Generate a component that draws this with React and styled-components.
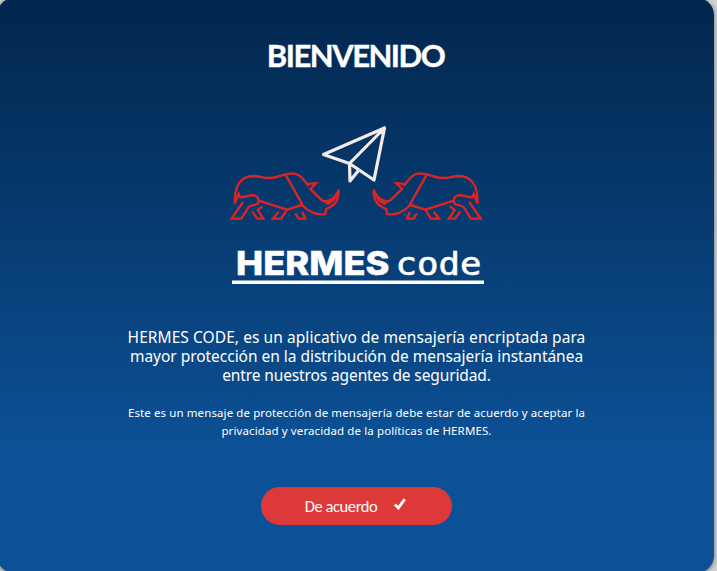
import React from "react";
import styled, { createGlobalStyle } from "styled-components";

const GlobalStyle = createGlobalStyle`
  * { box-sizing: border-box; }
  html, body { margin: 0; height: 571px; overflow: hidden; background: #d3d3d4; }
`;

const Viewport = styled.div`
  width: 717px;
  height: 571px;
  overflow: hidden;
`;

const Card = styled.main`
  width: 717px;
  height: 575px;
  margin: -2px 0 0 -3px;
  padding: 2px 0 0 2px;
  display: flex;
  flex-direction: column;
  align-items: center;
  border-radius: 17px;
  color: #fff;
  background: linear-gradient(180deg, #02264d 0%, #0c5197 80%, #0c5197 100%);
  box-shadow: 0 1px 5px rgba(0, 0, 0, 0.5);
`;

const Title = styled.h1`
  margin: 35px 0 0;
  padding-right: 2px;
  height: 40px;
  font: 700 31px/40px Lato, sans-serif;
  letter-spacing: -1.5px;
  -webkit-text-stroke: 0.4px #fff;
  white-space: nowrap;
`;

const Logo = styled.svg`
  display: block;
  width: 270px;
  height: 175px;
  margin-top: 40px;
`;

const Message = styled.div`
  margin-top: 38px;
  display: flex;
  flex-direction: column;
  align-items: center;
`;

const Note = styled(Message)`
  margin-top: 19px;
`;

const Line = styled.span`
  font: 400 15.5px/19px "Noto Sans", sans-serif;
  letter-spacing: ${(p) => p.$tracking}px;
  white-space: nowrap;
`;

const SmallLine = styled(Line)`
  font-size: 11.5px;
  line-height: 18px;
`;

const AcceptButton = styled.button`
  width: 191px;
  height: 38px;
  margin-top: 47px;
  padding: 0 2px 1px 0;
  display: flex;
  align-items: center;
  justify-content: center;
  gap: 17px;
  border: 0;
  border-radius: 19px;
  color: #fff;
  background: #de3939;
  font: 400 16.5px/36px Carlito, Lato, sans-serif;
  letter-spacing: -0.4px;
`;

const Check = styled.svg`
  width: 12px;
  height: 12px;
  margin-top: -3px;
`;

function Rhino() {
  return (
    <g fill="none" stroke="#dc2424" strokeWidth="7.2" strokeLinejoin="miter">
      <path d="M38 266 L40 236 C45 203 65 183 95 183 C115 184 125 190 145 189 C165 188 180 178 205 176 C225 174 235 182 246 196 L258 210 L263 206 L282 205 L265 222 L301 257 C320 263 339 251 350 224 C351 251 339 270 321 278 L312 283 L310 297 C285 302 258 290 240 270 L195 284 L110 257" />
      <path d="M38 266 L50 237 L54 247 C72 248 82 238 97 241 C109 244 113 256 107 266 C98 272 85 269 79 278 L58 311 L29 311 L63 261" />
      <path d="M190 178 L242 270" />
      <path d="M90 289 L106 311 L124 311 L107 285 L121 274" />
      <path d="M170 290 L153 311 L178 311 L195 284" />
      <path d="M220 295 L230 311 L250 311 L241 291" />
      <path d="M301 257 C320 263 339 251 350 224 C348 248 335 264 316 270 Z" fill="#dc2424" stroke="none" />
    </g>
  );
}

function HermesLogo() {
  return (
    <Logo viewBox="222 115 270 175" role="img" aria-label="HERMES code">
      <g transform="translate(222 115) scale(.33333)"><Rhino /></g>
      <g transform="translate(490.3 115) scale(-.33333 .33333)"><Rhino /></g>
      <g fill="none" stroke="#f4ece8" strokeWidth="3.2" strokeLinejoin="round" strokeLinecap="round">
        <path d="M384.5 128 L323.5 154.5 L349.5 163.5 L374 180 Z" />
        <path d="M384.5 128 L349.5 163.5 L350 181 L358.5 170.5" />
        <path d="M384.5 128 L377.5 132 L382.5 134 Z" fill="#f4ece8" strokeWidth="1" />
      </g>
      <text x="236" y="274.8" fill="#fff" fontFamily="Inter" fontWeight="800" fontSize="33" stroke="#fff" strokeWidth=".4" textLength="153.5" lengthAdjust="spacingAndGlyphs">HERMES</text>
      <text x="395.5" y="274.8" fill="#fff" stroke="#fff" strokeWidth=".6" fontFamily="DejaVu Sans Mono" fontSize="32" textLength="86" lengthAdjust="spacingAndGlyphs">code</text>
      <path d="M232 282.2H484" stroke="#fff" strokeWidth="3.5" />
    </Logo>
  );
}

export default function App() {
  return (
    <Viewport>
      <GlobalStyle />
      <Card>
        <Title>BIENVENIDO</Title>
        <HermesLogo />
        <Message>
          <Line $tracking={0.07}>HERMES CODE, es un aplicativo de mensajería encriptada para</Line>
          <Line $tracking={-0.03}>mayor protección en la distribución de mensajería instantánea</Line>
          <Line $tracking={-0.12}>entre nuestros agentes de seguridad.</Line>
        </Message>
        <Note>
          <SmallLine $tracking={0.1}>Este es un mensaje de protección de mensajería debe estar de acuerdo y aceptar la</SmallLine>
          <SmallLine $tracking={0.11}>privacidad y veracidad de la políticas de HERMES.</SmallLine>
        </Note>
        <AcceptButton>
          De acuerdo
          <Check viewBox="0 0 12 12">
            <path d="M1 6.5 L4.3 10 L10.8 1.2" fill="none" stroke="#fff" strokeWidth="2.8" />
          </Check>
        </AcceptButton>
      </Card>
    </Viewport>
  );
}
